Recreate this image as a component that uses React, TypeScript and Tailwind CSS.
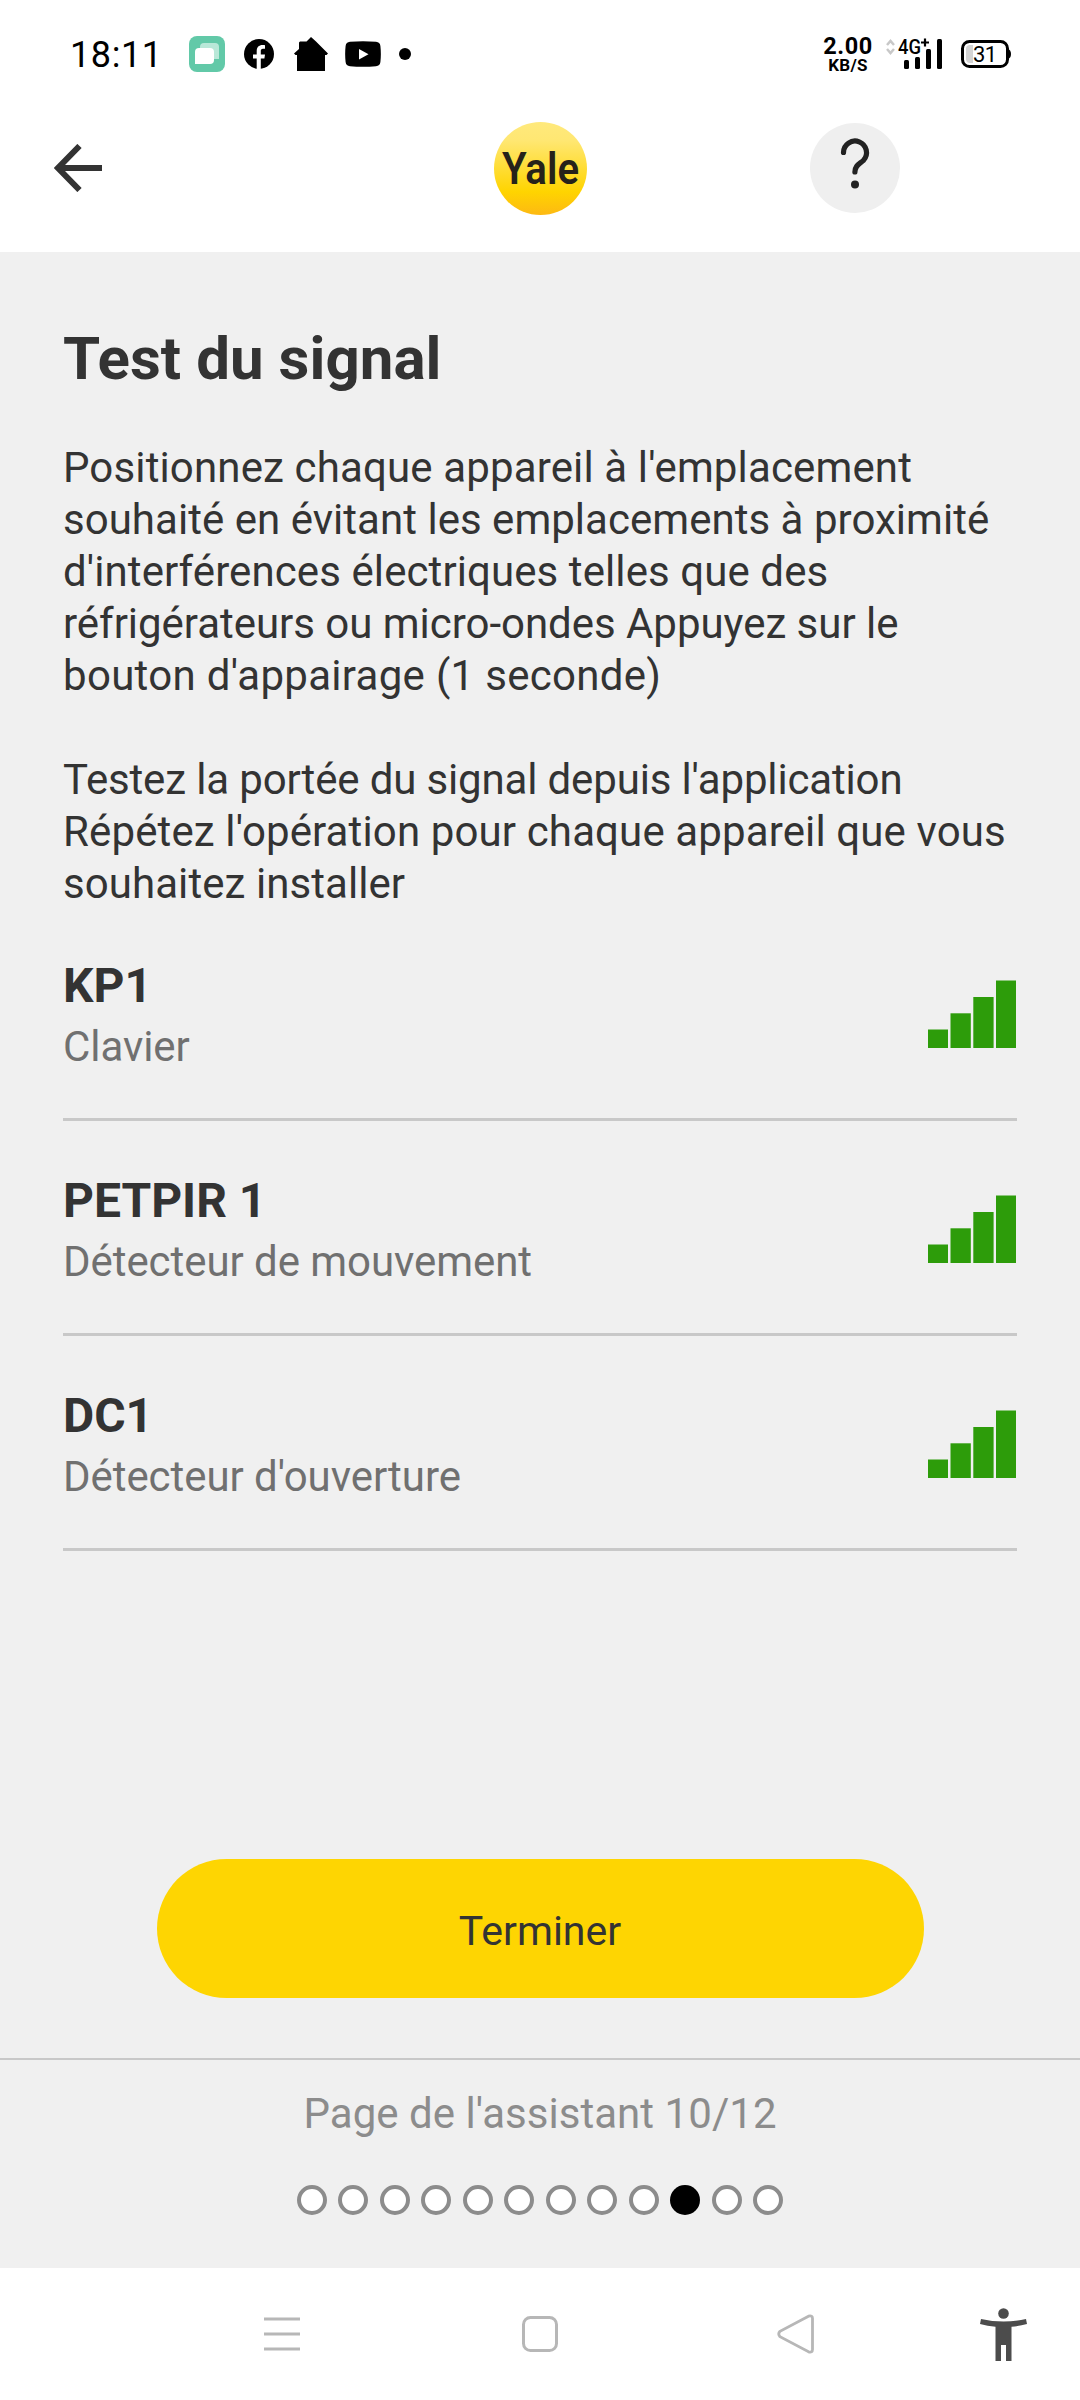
import React from 'react';

interface Device {
  name: string;
  type: string;
}

const devices: Device[] = [
  { name: 'KP1', type: 'Clavier' },
  { name: 'PETPIR 1', type: 'Détecteur de mouvement' },
  { name: 'DC1', type: "Détecteur d'ouverture" },
];

const instructions = [
  { text: "Positionnez chaque appareil à l'emplacement", spacing: 'tracking-[0.14px]' },
  { text: 'souhaité en évitant les emplacements à proximité', spacing: 'tracking-[0.03px]' },
  { text: "d'interférences électriques telles que des", spacing: 'tracking-[0.09px]' },
  { text: 'réfrigérateurs ou micro-ondes Appuyez sur le', spacing: 'tracking-[-0.03px]' },
  { text: "bouton d'appairage (1 seconde)", spacing: 'tracking-[0.3px]' },
  { text: '', spacing: '' },
  { text: "Testez la portée du signal depuis l'application", spacing: 'tracking-[-0.15px]' },
  { text: "Répétez l'opération pour chaque appareil que vous", spacing: 'tracking-[0.13px]' },
  { text: 'souhaitez installer', spacing: 'tracking-[0.07px]' },
];

const TOTAL_PAGES = 12;
const CURRENT_PAGE = 10;

function StatusBar() {
  return (
    <div className="flex h-[108px] items-center pl-[70px] pr-[69px] text-black">
      <span className="w-[119px] whitespace-nowrap pt-px text-[36px] leading-none tracking-[0.6px]">18:11</span>
      <svg className="shrink-0" width="36" height="36" viewBox="0 0 36 36">
        <rect width="36" height="36" rx="8" fill="#62c9a8" />
        <path d="M15 7h11a4 4 0 0 1 4 4v12H11V11a4 4 0 0 1 4-4z" fill="#b9e8d8" />
        <path d="M10 12h11a4 4 0 0 1 4 4v8a4 4 0 0 1-4 4H6V16a4 4 0 0 1 4-4z" fill="#fff" />
      </svg>
      <svg className="ml-[19px] shrink-0" width="30" height="30" viewBox="0 0 30 30">
        <circle cx="15" cy="15" r="15" fill="#000" />
        <path d="M12.7 30V19.5H9v-4h3.7v-3.3c0-4 2.1-6.2 5.9-6.2 1.2 0 2.4.2 2.4.2v3.5h-2c-1.7 0-2.2 1-2.2 2.1v3.7H21l-.6 4h-3.6V30z" fill="#fff" />
      </svg>
      <svg className="ml-5 shrink-0" width="34" height="34" viewBox="0 0 34 34">
        <path d="M17 0l5 4.500 12 12-1.500 1.500H31v16H3V18H1.500L0 16.500 5 12V5.500L6 4.500h6.500z" fill="#000" />
      </svg>
      <svg className="ml-[17px] shrink-0" width="36" height="26" viewBox="0 0 36 26">
        <path d="M5 .8Q18-.3 31 .8q4 .3 4.400 4.200.9 8 0 16-.4 3.900-4.400 4.200-13 1.100-26 0Q1 24.900.6 21-.3 13 .6 5 1 1.100 5 .8z" fill="#000" />
        <path d="M14 8v10.500l9.500-5.200z" fill="#fff" />
      </svg>
      <span className="ml-[18px] size-3 rounded-full bg-black" />

      <div className="ml-auto flex w-[50px] flex-col items-center pt-0.5 font-bold">
        <span className="h-5 text-[23.5px] leading-[19px] tracking-[0.6px]">2.00</span>
        <span className="h-[17px] text-[17px] leading-[17px] tracking-[0.3px]">KB/S</span>
      </div>
      <svg className="ml-3 shrink-0" width="126" height="60" viewBox="885 24 126 60" fontFamily="Roboto, sans-serif">
        <path d="M887 45l3.500-4 3.500 4M887 49l3.500 4 3.500-4" fill="none" stroke="#c8c8c8" strokeWidth="2.500" />
        <text x="898" y="54" fontSize="20" fontWeight="500" textLength="23" lengthAdjust="spacingAndGlyphs">4G</text>
        <path d="M921 42.500h8M925 38.500v8" stroke="#000" strokeWidth="2.200" />
        <g fill="#000">
          <rect x="904" y="60" width="5" height="9" rx="1.500" />
          <rect x="915" y="57" width="5" height="12" rx="1.500" />
          <rect x="926" y="49" width="5" height="20" rx="1.500" />
          <rect x="937" y="39" width="5" height="30" rx="1.500" />
        </g>
        <path d="M970 45h3v18h-3a4 4 0 0 1-4-4V49a4 4 0 0 1 4-4z" fill="#d4d4d4" />
        <rect x="962.500" y="41.500" width="45" height="25" rx="7" fill="none" stroke="#000" strokeWidth="3" />
        <path d="M1008 49q3 1 3 5t-3 5z" fill="#000" />
        <text x="973" y="62" fontSize="22" fontWeight="400" textLength="24">31</text>
      </svg>
    </div>
  );
}

function YaleLogo() {
  return (
    <svg width="94" height="94" viewBox="0 0 94 94">
      <defs>
        <linearGradient id="yale" x1="0" y1="0" x2="0" y2="1">
          <stop offset="0" stopColor="#ffe97c" />
          <stop offset=".2" stopColor="#ffe772" />
          <stop offset=".75" stopColor="#ffd400" />
          <stop offset="1" stopColor="#fdb913" />
        </linearGradient>
      </defs>
      <circle cx="47.500" cy="47.500" r="46.500" fill="url(#yale)" />
      <text
        x="9"
        y="63"
        fill="#26221a"
        fontFamily="Roboto, sans-serif"
        fontSize="45"
        fontWeight="600"
        textLength="77"
        lengthAdjust="spacingAndGlyphs"
      >
        Yale
      </text>
    </svg>
  );
}

function Header() {
  return (
    <header className="flex h-36 pl-[54px]">
      <svg className="mt-9 shrink-0" width="48" height="48" viewBox="0 0 48 48">
        <path d="M48 24H5M25.500 2L4 24l21.500 22" fill="none" stroke="#333" strokeWidth="6" />
      </svg>
      <div className="ml-[391px] mt-[13px]">
        <YaleLogo />
      </div>
      <div className="ml-[223px] mt-[15px] size-[90px] rounded-full bg-[#efefef]">
        <svg width="90" height="90" viewBox="0 0 90 90">
          <path d="M33.500 29.500a11.500 11.500 0 1 1 20 7.800c-4 3.700-8.600 5.200-8.600 11.700" fill="none" stroke="#222" strokeWidth="5.200" strokeLinecap="round" />
          <circle cx="45" cy="61.500" r="4" fill="#222" />
        </svg>
      </div>
    </header>
  );
}

function SignalBars() {
  return (
    <svg width="88" height="68" viewBox="0 0 88 68" fill="#2d9c0a">
      <rect y="49.500" width="20" height="18.500" />
      <rect x="22.500" y="33.300" width="20.300" height="34.700" />
      <rect x="45.300" y="17" width="20.300" height="51" />
      <rect x="68" y="0.500" width="20" height="67.500" />
    </svg>
  );
}

function DeviceRow({ name, type }: Device) {
  return (
    <li className="flex h-[215px] justify-between border-b-[3px] border-[#c8c8c8]">
      <div className="pt-[52px]">
        <h2 className="text-[48px] font-bold leading-[56px] text-[#333]">{name}</h2>
        <p className="mt-[5px] text-[42px] leading-[56px] tracking-[-0.06px] text-[#707070]">{type}</p>
      </div>
      <div className="mt-[74px] pr-px">
        <SignalBars />
      </div>
    </li>
  );
}

function Pagination() {
  return (
    <footer className="flex h-[210px] flex-col items-center border-t-2 border-[#c8c8c8]">
      <p className="mt-[29px] whitespace-nowrap text-[42px] leading-[50px] tracking-[0.04px] text-[#8c8c8c]">
        Page de l'assistant {CURRENT_PAGE}/{TOTAL_PAGES}
      </p>
      <div className="mt-[46px] flex w-[486px] justify-between">
        {Array.from({ length: TOTAL_PAGES }, (_, i) => (
          <span
            key={i}
            className={
              i + 1 === CURRENT_PAGE
                ? 'size-[30px] rounded-full bg-black'
                : 'size-[30px] rounded-full border-4 border-[#8c8c8c] bg-white'
            }
          />
        ))}
      </div>
    </footer>
  );
}

function NavigationBar() {
  return (
    <nav className="flex h-[132px] items-center pl-[264px]">
      <svg width="36" height="34" viewBox="0 0 36 34">
        <path d="M0 2h36M0 17h36M0 32h36" stroke="#b7b7b7" strokeWidth="3" />
      </svg>
      <svg className="ml-[222px]" width="36" height="36" viewBox="0 0 36 36">
        <rect x="1.500" y="1.500" width="33" height="33" rx="7" fill="none" stroke="#b7b7b7" strokeWidth="3" />
      </svg>
      <svg className="ml-[219px]" width="37" height="40" viewBox="0 0 37 40">
        <path d="M31.500 2.200L3 17.300Q.5 20 3 22.700l28.500 15.100q4 1.200 4-2.300v-31q0-3.500-4-2.300z" fill="none" stroke="#b7b7b7" strokeWidth="2.800" />
      </svg>
      <svg className="ml-[166px]" width="47" height="53" viewBox="0 0 47 53" fill="#4c4c4c">
        <circle cx="23.500" cy="5.500" r="5.300" />
        <path d="M1 11q22.500 5 45 0l1 5q-7.500 2-15.500 2.700V53H26V37h-5v16h-5.500V18.700Q7.500 18 0 16z" />
      </svg>
    </nav>
  );
}

export default function App() {
  return (
    <div className="flex h-[2400px] w-[1080px] flex-col overflow-hidden bg-white font-[Roboto,sans-serif]">
      <StatusBar />
      <Header />
      <main className="flex flex-1 flex-col bg-[#f0f0f0]">
        <div className="px-[63px] pt-[72px]">
          <h1 className="text-[60px] font-bold leading-[70px] tracking-[0.05px] text-[#333]">Test du signal</h1>
          <div className="mt-[48px] text-[42px] leading-[52px] text-[#333]">
            {instructions.map((line, index) => (
              <p key={index} className={`h-[52px] whitespace-nowrap ${line.spacing}`}>
                {line.text}
              </p>
            ))}
          </div>
          <ul className="-mt-1">
            {devices.map((device) => (
              <DeviceRow key={device.name} {...device} />
            ))}
          </ul>
        </div>
        <button className="mx-auto mb-[60px] mt-auto h-[139px] w-[767px] rounded-full bg-[#fed502] pt-1.5 text-[41px] text-[#333]">
          Terminer
        </button>
        <Pagination />
      </main>
      <NavigationBar />
    </div>
  );
}
